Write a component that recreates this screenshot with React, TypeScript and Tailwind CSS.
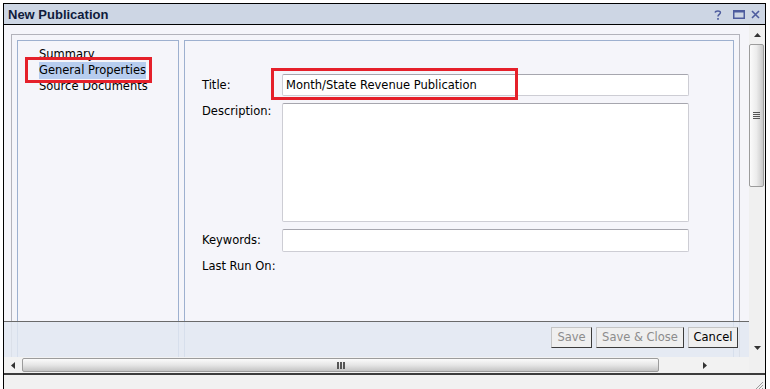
import React from 'react';

function TitleBar() {
  return (
    <div className="flex h-[21px] items-center justify-between border-b border-black bg-[#cdd6e4] pl-[4px] pr-[5px]">
      <span className="font-['Liberation_Sans',Arial,sans-serif] text-[13px] font-bold leading-none text-[#101c3c]">New Publication</span>
      <div className="flex items-center gap-[6px] pt-[1px]">
        <svg width="8" height="10" viewBox="0 0 8 10" className="-ml-[2px]">
          <path d="M1.2 2.6 C1.4 0.6 6.6 0.4 6.4 2.8 C6.3 4.4 4 4.6 4 6.6" fill="none" stroke="#4d5c9e" strokeWidth="1.5" />
          <rect x="3.2" y="8" width="1.6" height="1.8" fill="#4d5c9e" />
        </svg>
        <svg width="12" height="9" viewBox="0 0 12 9" className="ml-[5px]">
          <rect x="0.75" y="0.75" width="10.5" height="7.5" fill="none" stroke="#4d5c9e" strokeWidth="1.5" />
          <rect x="0" y="0" width="12" height="2.5" fill="#4d5c9e" />
        </svg>
        <svg width="9" height="9" viewBox="0 0 9 9">
          <path d="M1 1 L8 8 M8 1 L1 8" stroke="#4d5c9e" strokeWidth="1.6" />
        </svg>
      </div>
    </div>
  );
}

function NavPanel() {
  return (
    <div className="h-[400px] w-[162px] shrink-0 border border-[#9db0cf] pl-[21px] pt-[5px] text-black">
      <div className="h-[16px] leading-[17px]">Summary</div>
      <div className="h-[16px] leading-[16px]">
        <span className="inline-block bg-[#b7cdef] leading-[17px]">General Properties</span>
      </div>
      <div className="h-[16px] leading-[17px]">Source Documents</div>
    </div>
  );
}

const inputCls = 'w-[407px] rounded-[2px] border border-[#cdcdd4] border-t-[#a6a6ae] bg-white';

function FormPanel() {
  return (
    <div className="h-[400px] w-[550px] shrink-0 border border-[#9db0cf] pl-[17px] pt-[33px] text-black">
      <div className="grid grid-cols-[80px_407px] gap-y-[7px]">
        <div className="flex items-center pt-[2px]">Title:</div>
        <div className={`${inputCls} flex h-[22px] items-center pl-[3px] pt-[2px]`}>Month/State Revenue Publication</div>

        <div className="pt-[1px] leading-[14px]">Description:</div>
        <div className={`${inputCls} h-[119px]`} />

        <div className="flex items-center pt-[1px]">Keywords:</div>
        <div className={`${inputCls} h-[23px]`} />

        <div className="leading-[14px]">Last Run On:</div>
        <div />
      </div>
    </div>
  );
}

function Btn({ label, disabled, width }: { label: string; disabled?: boolean; width: string }) {
  return (
    <button
      className={`${width} h-[21px] border border-[#c4c4c4] border-r-[#3c3c3c] border-b-[#3c3c3c] bg-[#efefef] pt-[1px] leading-none ${
        disabled ? 'text-[#8c8c8c]' : 'text-black'
      }`}
    >
      {label}
    </button>
  );
}

function Footer() {
  return (
    <div className="absolute bottom-0 left-0 right-0 flex h-[36px] justify-end gap-[4px] border-t border-[#6a6a6a] bg-[#e2e7f1]/85 pr-[11px] pt-[5px]">
      <Btn label="Save" disabled width="w-[41px]" />
      <Btn label="Save & Close" disabled width="w-[88px]" />
      <Btn label="Cancel" width="w-[50px]" />
    </div>
  );
}

function Tri({ dir }: { dir: 'up' | 'down' | 'left' | 'right' }) {
  const d = {
    up: 'M0 4 L3.5 0 L7 4 Z',
    down: 'M0 0 L7 0 L3.5 4 Z',
    left: 'M4 0 L4 7 L0 3.5 Z',
    right: 'M0 0 L4 3.5 L0 7 Z',
  }[dir];
  const vertical = dir === 'up' || dir === 'down';
  return (
    <svg width={vertical ? 7 : 4} height={vertical ? 4 : 7} viewBox={vertical ? '0 0 7 4' : '0 0 4 7'}>
      <path d={d} fill="#333" />
    </svg>
  );
}

function VScroll() {
  return (
    <div className="flex w-[16px] shrink-0 flex-col bg-[#f0f0f0]">
      <div className="flex h-[19px] items-center justify-center pl-[1px]">
        <Tri dir="up" />
      </div>
      <div className="flex h-[143px] w-[15px] items-center justify-center rounded-[2px] border border-[#9c9c9c] bg-linear-to-r from-[#fbfbfb] via-[#ececec] to-[#c9c9c9]">
        <div className="flex flex-col gap-[1px]">
          <div className="h-[1px] w-[7px] bg-[#555]" />
          <div className="h-[1px] w-[7px] bg-[#555]" />
          <div className="h-[1px] w-[7px] bg-[#555]" />
          <div className="h-[1px] w-[7px] bg-[#555]" />
        </div>
      </div>
      <div className="flex-1" />
      <div className="flex h-[18px] items-center justify-center pl-[1px]">
        <Tri dir="down" />
      </div>
    </div>
  );
}

function HScroll() {
  return (
    <div className="flex h-[16px] bg-[#f2f2f2]">
      <div className="flex w-[745px] items-center">
        <div className="flex w-[18px] justify-center">
          <Tri dir="left" />
        </div>
        <div className="flex h-[14px] w-[637px] items-center justify-center rounded-[2px] border border-[#9c9c9c] bg-linear-to-b from-[#fbfbfb] via-[#e6e6e6] to-[#c4c4c4]">
          <div className="flex gap-[1px]">
            <div className="h-[7px] w-[2px] bg-[#555]" />
            <div className="h-[7px] w-[2px] bg-[#555]" />
            <div className="h-[7px] w-[2px] bg-[#555]" />
          </div>
        </div>
        <div className="flex flex-1 justify-center pl-[2px]">
          <Tri dir="right" />
        </div>
      </div>
      <div className="w-[16px] bg-[#f0f0f0]" />
    </div>
  );
}

export default function App() {
  return (
    <div className="h-[389px] w-[770px] overflow-hidden bg-white pl-[3px] pt-[3px] font-['DejaVu_Sans',Verdana,sans-serif] text-[11.5px]">
      <div className="w-[763px] border border-b-0 border-black">
        <TitleBar />
        <div className="flex h-[332px]">
          <div className="relative h-[332px] w-[745px] overflow-hidden bg-[#f5f5fa] pl-[7px] pt-[9px]">
            <div className="flex h-[420px] w-[729px] gap-[5px] border border-[#b3b3bb] p-[5px]">
              <NavPanel />
              <FormPanel />
            </div>
            <div className="absolute left-[21px] top-[32px] h-[26px] w-[127px] border-[3px] border-[#e5202a]" />
            <div className="absolute left-[267px] top-[43px] h-[32px] w-[247px] border-[3px] border-[#e5202a]" />
            <Footer />
          </div>
          <VScroll />
        </div>
        <HScroll />
        <div className="h-[2px] bg-[#3c3c3c]" />
        <div className="flex h-[16px] items-end justify-end bg-[#f1f1f1] pb-[1px] pr-[1px]">
          <svg width="9" height="9" viewBox="0 0 9 9">
            <path d="M8 1 L1 8 M8 4 L4 8 M8 7 L7 8" stroke="#9a9a9a" strokeWidth="1" />
          </svg>
        </div>
      </div>
    </div>
  );
}
